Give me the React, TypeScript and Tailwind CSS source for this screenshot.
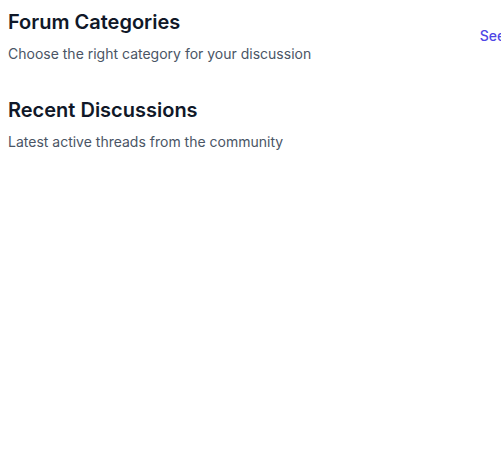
export default function App() {
  return (
    <div className="min-h-[463px] bg-white font-['Inter',sans-serif]">
      <div className="w-[532px] px-2 pt-2">
        <section>
          <div className="flex items-center justify-between">
            <div>
              <h2 className="text-xl font-semibold leading-7 text-gray-900">Forum Categories</h2>
              <p className="mt-2 text-sm leading-5 text-gray-600">Choose the right category for your discussion</p>
            </div>
            <a href="#" className="whitespace-nowrap text-sm font-medium text-[#4f46e5]">See all</a>
          </div>
        </section>
        <section className="mt-8">
          <h2 className="text-xl font-semibold leading-7 text-gray-900">Recent Discussions</h2>
          <p className="mt-2 text-sm leading-5 text-gray-600">Latest active threads from the community</p>
        </section>
      </div>
    </div>
  );
}
